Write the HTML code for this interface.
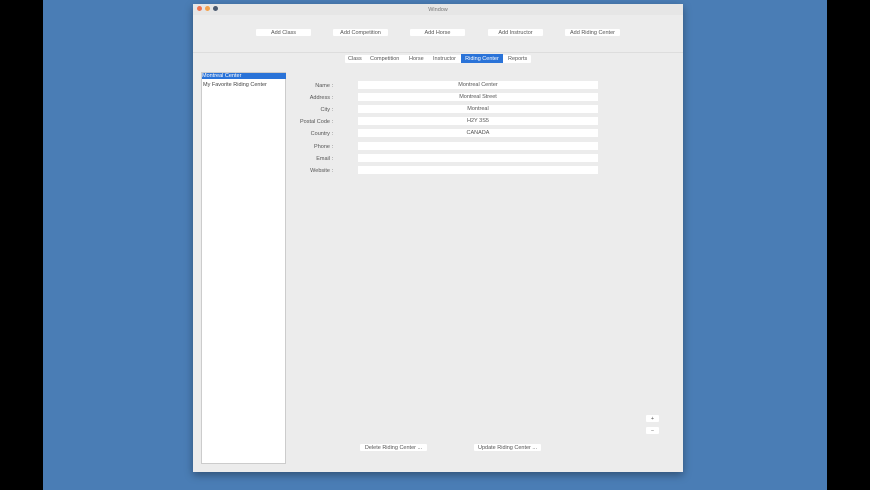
<!DOCTYPE html><html><head><style>
body{margin:0;width:870px;height:490px;background:#000;position:relative;overflow:hidden;font-family:"Liberation Sans",sans-serif;}
.bg{position:absolute;left:43px;top:0;width:784px;height:490px;background:#4a7db5;}
.win{position:absolute;left:193px;top:4px;width:490px;height:468px;background:#ececec;box-shadow:0 3px 8px rgba(0,0,0,.35);}
.a{position:absolute;}
.t{font-size:5.5px;color:#444;}
.btn{position:absolute;background:#fff;height:7px;font-size:5.5px;color:#555;text-align:center;line-height:8px;border-radius:1px;}
.lbl{position:absolute;width:60px;left:273px;text-align:right;font-size:5.5px;color:#555;}
.fld{position:absolute;left:358px;width:240px;height:8px;background:#fff;font-size:5.5px;color:#555;text-align:center;line-height:9.5px;}
.dot{position:absolute;width:5px;height:5px;border-radius:50%;}
</style></head><body>
<div class="bg"></div>
<div class="win">
<div class="a" style="left:0;top:0;width:490px;height:11px;background:#e6e6e6;"></div>
<div class="dot" style="left:4px;top:2px;background:#f0734f"></div>
<div class="dot" style="left:12px;top:2px;background:#f4a24d"></div>
<div class="dot" style="left:20px;top:2px;background:#4a5a70"></div>
<div class="a t" style="left:0;width:490px;top:2.5px;text-align:center;color:#777;">Window</div>
<div class="a" style="left:0;top:48px;width:490px;height:1px;background:#ddd"></div>
</div>
<div class="btn" style="left:256px;top:29px;width:55px">Add Class</div>
<div class="btn" style="left:333px;top:29px;width:55px">Add Competition</div>
<div class="btn" style="left:410px;top:29px;width:55px">Add Horse</div>
<div class="btn" style="left:488px;top:29px;width:55px">Add Instructor</div>
<div class="btn" style="left:565px;top:29px;width:55px">Add Riding Center</div>
<div class="btn" style="left:345px;top:55px;width:186px;height:8px"></div>
<div class="a t" style="left:348px;top:56px;color:#555">Class</div>
<div class="a t" style="left:370px;top:56px;color:#555">Competition</div>
<div class="a t" style="left:409px;top:56px;color:#555">Horse</div>
<div class="a t" style="left:433px;top:56px;color:#555">Instructor</div>
<div class="a t" style="left:461px;top:54px;width:42px;height:9px;background:#2a73d8;color:#fff;text-align:center;line-height:10px">Riding Center</div>
<div class="a t" style="left:508px;top:56px;color:#555">Reports</div>
<div class="a" style="left:201px;top:72px;width:85px;height:392px;background:#fff;border:1px solid #ccc;box-sizing:border-box"></div>
<div class="a t" style="left:202px;top:73px;width:84px;height:6px;background:#2a73d8;color:#fff;line-height:7px">Montreal Center</div>
<div class="a t" style="left:203px;top:81.5px">My Favorite Riding Center</div>
<div class="lbl" style="top:83px">Name :</div><div class="fld" style="top:81px">Montreal Center</div>
<div class="lbl" style="top:95px">Address :</div><div class="fld" style="top:93px">Montreal Street</div>
<div class="lbl" style="top:107px">City :</div><div class="fld" style="top:105px">Montreal</div>
<div class="lbl" style="top:119px">Postal Code :</div><div class="fld" style="top:117px">H2Y 3S5</div>
<div class="lbl" style="top:131px">Country :</div><div class="fld" style="top:129px">CANADA</div>
<div class="lbl" style="top:144px">Phone :</div><div class="fld" style="top:142px"></div>
<div class="lbl" style="top:156px">Email :</div><div class="fld" style="top:154px"></div>
<div class="lbl" style="top:168px">Website :</div><div class="fld" style="top:166px"></div>
<div class="btn" style="left:360px;top:444px;width:67px">Delete Riding Center ...</div>
<div class="btn" style="left:474px;top:444px;width:67px">Update Riding Center ...</div>
<div class="btn" style="left:646px;top:415px;width:13px">+</div>
<div class="btn" style="left:646px;top:427px;width:13px">−</div>
</body></html>
